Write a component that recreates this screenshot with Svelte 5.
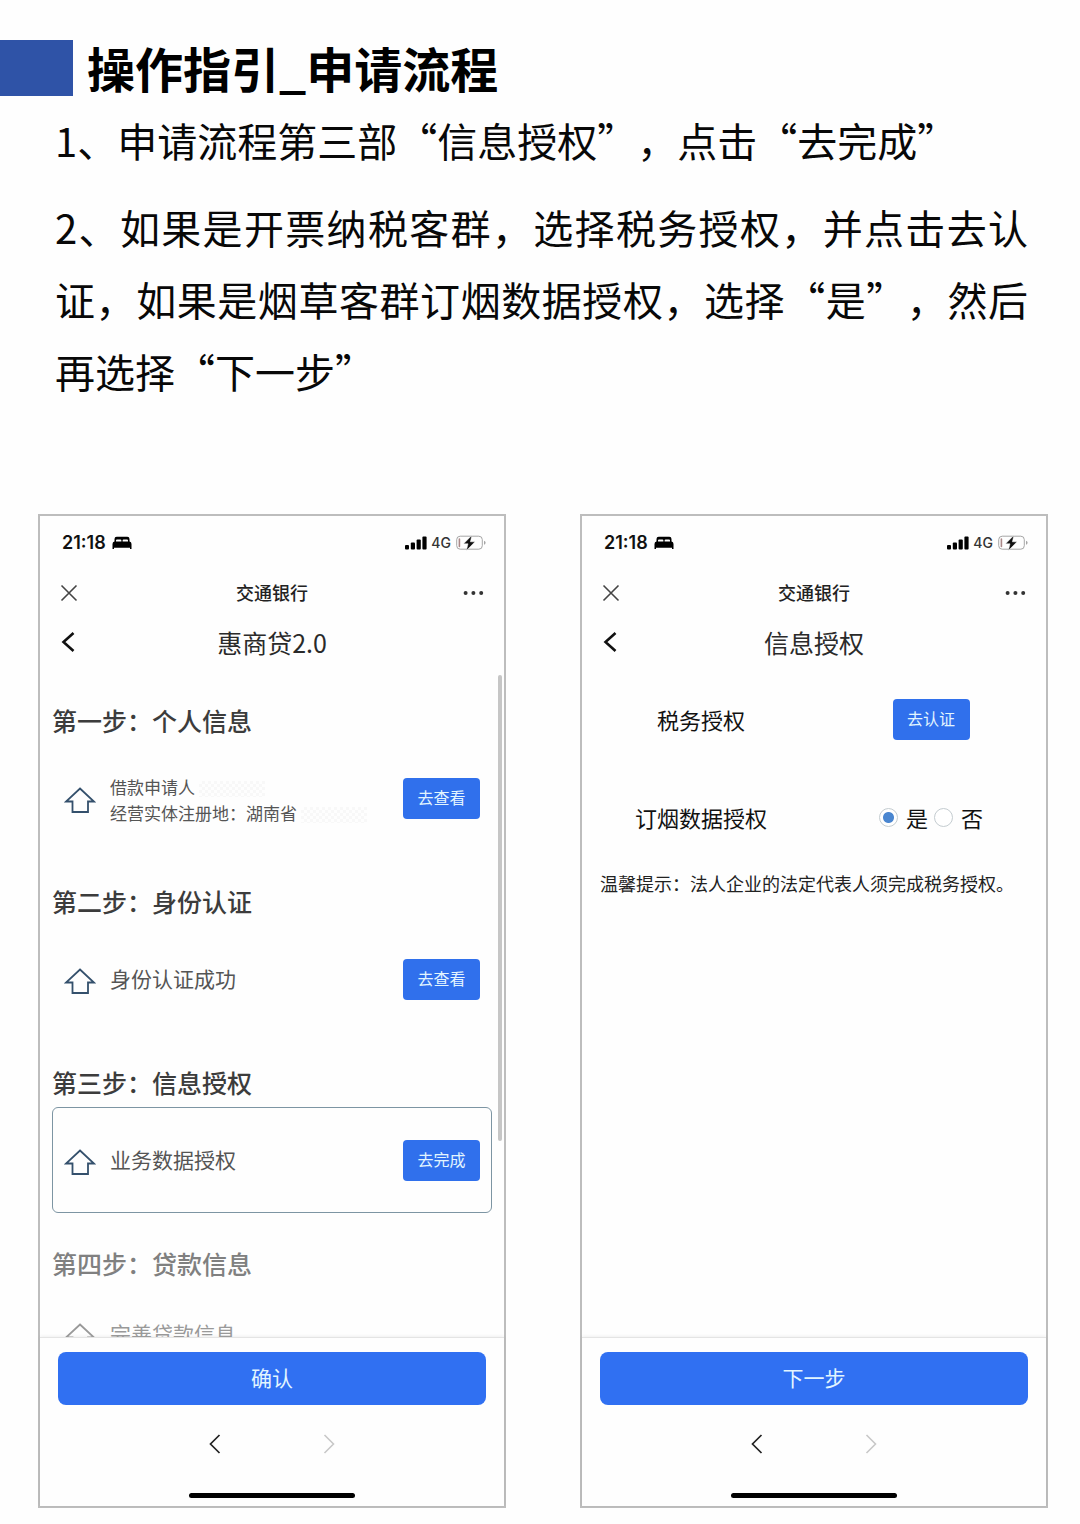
<script>
    let tobacco = $state('yes');

    const steps = [
        { title: '第一步：个人信息', lines: ['借款申请人', '经营实体注册地：湖南省'], masked: true, action: '去查看' },
        { title: '第二步：身份认证', lines: ['身份认证成功'], action: '去查看' },
        { title: '第三步：信息授权', lines: ['业务数据授权'], action: '去完成', current: true },
        { title: '第四步：贷款信息', lines: ['完善贷款信息'], pending: true }
    ];
</script>

{#snippet phoneTop(title)}
    <div class="status">
        <span class="time">21:18</span>
        <svg class="bed" width="20" height="14" viewBox="0 0 20 14" aria-hidden="true">
            <path d="M2.5 6V3Q2.5 0.8 4.7 0.8H15.3Q17.5 0.8 17.5 3V6H16V4.6Q16 3.4 15 3.4H11.6Q10.6 3.4 10.6 4.6V6H9.4V4.6Q9.4 3.4 8.4 3.4H5Q4 3.4 4 4.6V6Z" />
            <path d="M0.5 13V8Q0.5 5.4 2.5 5.4H17.5Q19.5 5.4 19.5 8V13H18V11.8H2V13Z" />
        </svg>
        <svg class="signal" width="22" height="14" viewBox="0 0 22 14" aria-hidden="true">
            <rect x="0" y="9" width="4" height="4.5" rx="1" />
            <rect x="5.8" y="6.5" width="4.2" height="7" rx="1" />
            <rect x="11.6" y="3.5" width="4.2" height="10" rx="1" />
            <rect x="17.4" y="0.5" width="4.2" height="13" rx="1" />
        </svg>
        <span class="net">4G</span>
        <svg width="30" height="16" viewBox="0 0 30 16" aria-hidden="true">
            <rect x="0.7" y="1.2" width="25.6" height="13" rx="3.5" fill="none" stroke="#a5a5a5" />
            <rect x="2.6" y="3.2" width="1.6" height="9" rx="0.8" fill="#a88" />
            <path d="M28 5.8Q29.6 6.4 29.6 7.8T28 9.8Z" fill="#a5a5a5" />
            <path d="M15.8 0.4L7.6 8.8H12L10.4 15.6L19 6.8H14.4Z" fill="#111" stroke="#fff" stroke-width="0.5" />
        </svg>
    </div>
    <div class="bar">
        <button class="icon" aria-label="关闭">
            <svg width="18" height="18" viewBox="0 0 18 18"><path d="M1.5 1.5L16.5 16.5M16.5 1.5L1.5 16.5" stroke="#444" stroke-width="1.6" /></svg>
        </button>
        <span class="app-name">交通银行</span>
        <button class="icon more" aria-label="更多">
            <svg width="22" height="6" viewBox="0 0 22 6"><circle cx="3.6" cy="3" r="2" /><circle cx="11.4" cy="3" r="2" /><circle cx="19.2" cy="3" r="2" /></svg>
        </button>
    </div>
    <div class="bar title-bar">
        <button class="icon" aria-label="返回">
            <svg width="16" height="22" viewBox="0 0 16 22"><path d="M13.5 1L3.5 10L13.5 19" fill="none" stroke="#111" stroke-width="2.6" /></svg>
        </button>
        <h2>{title}</h2>
        <span></span>
    </div>
{/snippet}

{#snippet phoneBottom(label)}
    <div class="footer">
        <button class="submit">{label}</button>
        <div class="browser-nav">
            <button class="icon" aria-label="后退">
                <svg width="12" height="20" viewBox="0 0 12 20"><path d="M10.5 1L1.5 10L10.5 19" fill="none" stroke="#222" stroke-width="1.7" /></svg>
            </button>
            <button class="icon" aria-label="前进">
                <svg width="12" height="20" viewBox="0 0 12 20"><path d="M1.5 1L10.5 10L1.5 19" fill="none" stroke="#c8c8c8" stroke-width="1.6" /></svg>
            </button>
        </div>
        <div class="home-bar"></div>
    </div>
{/snippet}

<main lang="zh-CN">
    <header>
        <span class="mark"></span>
        <h1>操作指引_申请流程</h1>
    </header>

    <div class="intro">
        <p>1、申请流程第三部“信息授权”，点击“去完成”</p>
        <p>2、如果是开票纳税客群，选择税务授权，并点击去认证，如果是烟草客群订烟数据授权，选择“是”，然后再选择“下一步”</p>
    </div>

    <div class="phones">
        <section class="phone">
            {@render phoneTop('惠商贷2.0')}
            <div class="steps">
                {#each steps as step}
                    <div class="step" class:pending={step.pending}>
                        <h3>{step.title}</h3>
                        <div class="item" class:current={step.current}>
                            <svg class="arrow" width="32" height="27" viewBox="0 0 32 27" aria-hidden="true">
                                <path d="M16 1.5L30 14.5H24V25H8.5V14.5H2Z" fill="none" stroke="currentColor" stroke-width="1.8" />
                            </svg>
                            <div class="desc" class:small={step.lines.length > 1}>
                                {#each step.lines as line}
                                    <div>{line}{#if step.masked}<span class="mask"></span>{/if}</div>
                                {/each}
                            </div>
                            {#if step.action}
                                <button class="action">{step.action}</button>
                            {/if}
                        </div>
                    </div>
                {/each}
                <div class="scrollbar"></div>
            </div>
            {@render phoneBottom('确认')}
        </section>

        <section class="phone">
            {@render phoneTop('信息授权')}
            <div class="auth">
                <div class="auth-row">
                    <span>税务授权</span>
                    <button class="action">去认证</button>
                </div>
                <div class="auth-row">
                    <span id="tobacco-label">订烟数据授权</span>
                    <div class="radios" role="radiogroup" aria-labelledby="tobacco-label">
                        <label><input type="radio" name="tobacco" value="yes" bind:group={tobacco} />是</label>
                        <label><input type="radio" name="tobacco" value="no" bind:group={tobacco} />否</label>
                    </div>
                </div>
                <p class="hint">温馨提示：法人企业的法定代表人须完成税务授权。</p>
            </div>
            {@render phoneBottom('下一步')}
        </section>
    </div>
</main>

<style>
    :global(body) { background: #fefefe; }

    main {
        padding: 40px 0 16px;
        font-family: "Noto Sans CJK SC", sans-serif;
        color: #111;
        text-spacing-trim: space-all;
    }
    h1, h2, h3, p { margin: 0; }
    button { font-family: inherit; border: 0; padding: 0; cursor: pointer; }

    header { display: flex; align-items: center; gap: 14px; height: 56px; }
    .mark { width: 73px; height: 56px; background: #2f53a7; }
    h1 { font-size: 48px; line-height: 56px; padding-bottom: 2px; font-weight: 700; color: #000; }

    .intro { padding: 8px 52px 0 55px; display: flex; flex-direction: column; gap: 15px; }
    .intro p { font-size: 40px; line-height: 72px; color: #080808; text-align: justify; }

    .phones {
        display: grid;
        grid-template-columns: 1fr 1fr;
        gap: 74px;
        margin-top: 107px;
        padding: 0 32px 0 38px;
    }
    .phone { display: flex; flex-direction: column; border: 2px solid #bdbdbd; min-width: 0; }

    .status { display: flex; align-items: center; height: 54px; padding: 0 18px 0 22px; }
    .time { font: 600 18px/24px Inter, sans-serif; }
    .bed { margin-left: 6px; }
    .signal { margin-left: auto; }
    .net { font: 500 14px/24px Inter, sans-serif; color: #333; margin: 0 5px 0 4px; }

    .bar {
        display: grid;
        grid-template-columns: 1fr auto 1fr;
        align-items: center;
        height: 46px;
        padding: 0 20px;
    }
    .title-bar { height: 54px; }
    .icon { display: flex; background: none; justify-self: start; }
    .more { justify-self: end; fill: #333; }
    .app-name { font-size: 18px; line-height: 26px; padding-bottom: 2px; font-weight: 500; color: #222; }
    h2 { font-size: 25px; line-height: 36px; padding-bottom: 2px; font-weight: 400; color: #2a2a2a; }

    /* scroll area, the fourth step runs under the footer */
    .steps {
        position: relative;
        display: flex;
        flex-direction: column;
        gap: 32px;
        box-sizing: border-box;
        height: 667px;
        padding: 32px 12px 0;
        overflow: hidden;
    }
    .scrollbar {
        position: absolute;
        top: 5px;
        right: 2px;
        width: 4px;
        height: 466px;
        border-radius: 2px;
        background: #c6c6c6;
    }
    h3 { font-size: 25px; line-height: 36px; font-weight: 500; color: #3c3c3c; margin-bottom: 7px; }
    .item {
        display: flex;
        align-items: center;
        gap: 14px;
        box-sizing: border-box;
        height: 106px;
        padding: 0 11px;
        border: 1px solid transparent;
        border-radius: 6px;
        color: #34506c;
    }
    .item.current { border-color: #7d95a3; }
    .arrow { margin-top: 4px; }
    .desc { flex: 1; font-size: 21px; line-height: 30px; padding-bottom: 2px; color: #555; }
    .desc.small { font-size: 17px; line-height: 26px; padding: 4px 0 0; }
    .mask {
        display: inline-block;
        width: 66px;
        height: 16px;
        margin-left: 4px;
        vertical-align: middle;
        background: repeating-conic-gradient(#f8f8f8 0 25%, #fefefe 0 50%) 0 0 / 6px 6px;
    }
    .pending h3 { color: #808080; }
    .pending .item { height: 92px; color: #999; }
    .pending .desc { color: #999; }

    .action {
        width: 77px;
        height: 41px;
        padding-bottom: 2px;
        border-radius: 4px;
        background: #3070ec;
        color: #e2f5ff;
        font-size: 16px;
        line-height: 24px;
    }

    .auth { flex: 1; }
    .auth-row {
        display: grid;
        grid-template-columns: 1fr 1fr;
        align-items: center;
        justify-items: center;
        height: 98px;
        padding-left: 4px;
        font-size: 22px;
        line-height: 32px;
    }
    .radios { display: flex; gap: 6px; }
    .radios label { display: flex; align-items: center; gap: 8px; }
    .radios input {
        appearance: none;
        box-sizing: border-box;
        width: 19px;
        height: 19px;
        margin: 0;
        border: 1px solid #c4ccd0;
        border-radius: 50%;
        background: #fff;
    }
    .radios input:checked { background: radial-gradient(circle, #4a86d0 5px, #fff 6px); }
    .hint { padding-left: 18px; font-size: 18px; line-height: 34px; color: #222; }

    .footer {
        border-top: 1px solid #e4e4e4;
        box-shadow: 0 -1px 3px rgba(0, 0, 0, 0.06);
        padding: 14px 18px 8px;
    }
    .submit {
        display: block;
        width: 100%;
        height: 53px;
        padding-bottom: 4px;
        border-radius: 8px;
        background: #3070f2;
        color: #e2f5ff;
        font-size: 21px;
        line-height: 30px;
    }
    .browser-nav { display: flex; justify-content: center; align-items: center; gap: 102px; height: 78px; }
    .home-bar { width: 166px; height: 5px; margin: 10px auto 0; border-radius: 3px; background: #000; }
</style>
